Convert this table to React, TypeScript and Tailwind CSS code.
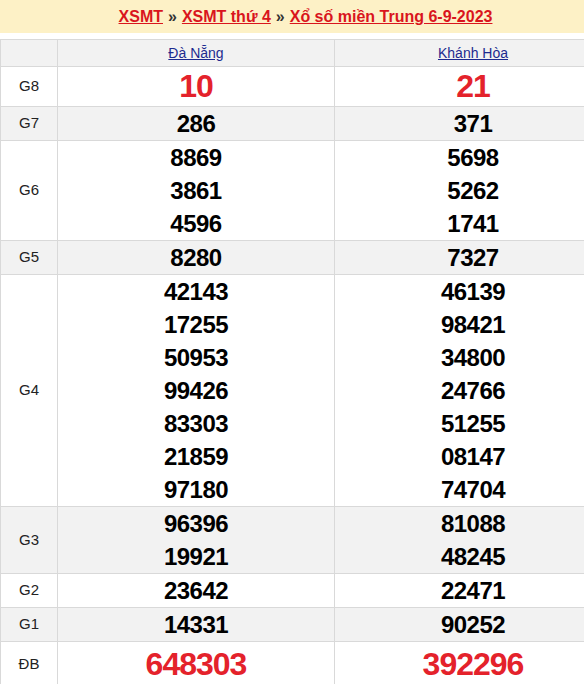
const rows: { label: string; a: string[]; b: string[]; big?: 'g8' | 'db'; gray?: boolean }[] = [
  { label: 'G8', a: ['10'], b: ['21'], big: 'g8' },
  { label: 'G7', a: ['286'], b: ['371'], gray: true },
  { label: 'G6', a: ['8869', '3861', '4596'], b: ['5698', '5262', '1741'] },
  { label: 'G5', a: ['8280'], b: ['7327'], gray: true },
  {
    label: 'G4',
    a: ['42143', '17255', '50953', '99426', '83303', '21859', '97180'],
    b: ['46139', '98421', '34800', '24766', '51255', '08147', '74704'],
  },
  { label: 'G3', a: ['96396', '19921'], b: ['81088', '48245'], gray: true },
  { label: 'G2', a: ['23642'], b: ['22471'] },
  { label: 'G1', a: ['14331'], b: ['90252'], gray: true },
  { label: 'ĐB', a: ['648303'], b: ['392296'], big: 'db' },
];

function Cell({ nums, big }: { nums: string[]; big?: 'g8' | 'db' }) {
  return (
    <td className="border border-[#d9d9d9] p-0 text-center align-middle">
      {nums.map((n) =>
        big === 'g8' ? (
          <div key={n} className="h-[39px] leading-[39px] text-[32px] font-bold tracking-[-1px] text-[#e4222b]">
            {n}
          </div>
        ) : big === 'db' ? (
          <div key={n} className="h-[44px] leading-[44px] text-[32px] font-bold tracking-[-1px] text-[#e4222b]">
            {n}
          </div>
        ) : (
          <div key={n} className="h-[33px] leading-[33px] text-[24px] font-bold tracking-[-0.5px] text-black">
            {n}
          </div>
        )
      )}
    </td>
  );
}

export default function App() {
  return (
    <div
      className="w-[584px] h-[684px] overflow-hidden bg-white"
      style={{ fontFamily: '"Liberation Sans", Arial, sans-serif' }}
    >
      <div className="w-[611px]">
        <div className="h-[33px] bg-[#fdf1c6] flex items-center justify-center text-[16px] font-bold text-[#d9151d]">
          <a className="underline" href="#">XSMT</a>
          <span className="mx-[5px] text-[#333]">»</span>
          <a className="underline" href="#">XSMT thứ 4</a>
          <span className="mx-[5px] text-[#333]">»</span>
          <a className="underline" href="#">Xổ số miền Trung 6-9-2023</a>
        </div>
        <table className="mt-[6px] w-[611px] border-collapse table-fixed">
          <colgroup>
            <col className="w-[57px]" />
            <col className="w-[277px]" />
            <col className="w-[277px]" />
          </colgroup>
          <thead>
            <tr className="bg-[#f2f2f2] h-[27px]">
              <th className="border border-[#d9d9d9] p-0"></th>
              <th className="border border-[#d9d9d9] p-0 text-[14px] font-normal">
                <a className="underline text-[#1d2a8f]" href="#">Đà Nẵng</a>
              </th>
              <th className="border border-[#d9d9d9] p-0 text-[14px] font-normal">
                <a className="underline text-[#1d2a8f]" href="#">Khánh Hòa</a>
              </th>
            </tr>
          </thead>
          <tbody>
            {rows.map((r) => (
              <tr key={r.label} className={r.gray ? 'bg-[#f2f2f2]' : 'bg-white'}>
                <td className="border border-[#d9d9d9] p-0 text-center text-[15px] text-[#222]">{r.label}</td>
                <Cell nums={r.a} big={r.big} />
                <Cell nums={r.b} big={r.big} />
              </tr>
            ))}
          </tbody>
        </table>
      </div>
    </div>
  );
}
